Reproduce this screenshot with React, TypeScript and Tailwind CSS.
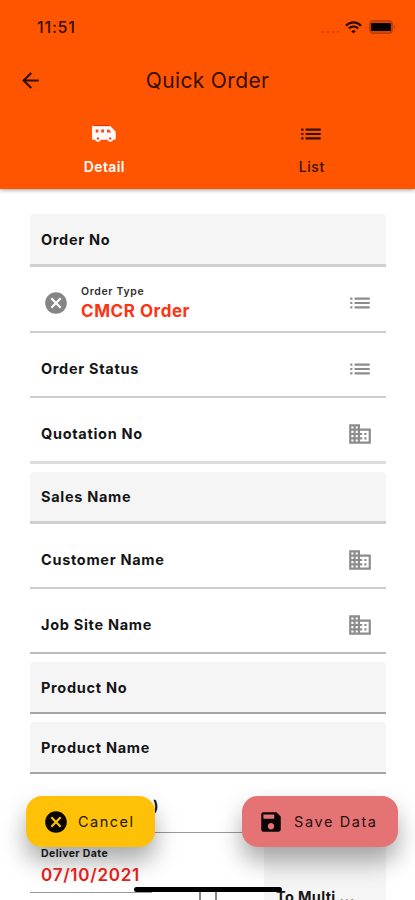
import type { ReactNode } from "react";
import {
  MdArrowBack,
  MdCancel,
  MdDomain,
  MdList,
  MdSave,
} from "react-icons/md";

function StatusBar() {
  return (
    <div className="flex h-[54px] items-center justify-between pl-[37px] pr-[19px]">
      <span className="text-[16px] font-medium leading-none tracking-[0.8px] text-[#351000]">11:51</span>
      <div className="flex items-center">
        <div className="mr-[6px] mt-[9px] flex gap-[3px]">
          {[0, 1, 2, 3].map((dot) => (
            <span key={dot} className="h-[2px] w-[2px] rounded-full bg-[#c63e00]" />
          ))}
        </div>
        <svg width="17" height="13" viewBox="0 0 17 13" fill="none" stroke="#250b00" strokeWidth="2.1">
          <path d="M1 4.7C5.3.3 11.7.3 16 4.7" />
          <path d="M3.8 7.6c2.8-2.6 6.6-2.6 9.4 0" />
          <path d="M6.2 10.2c1.5-1.3 3.1-1.3 4.6 0L8.5 12.5z" fill="#250b00" stroke="none" />
        </svg>
        <svg className="ml-[7px]" width="27" height="14" viewBox="0 0 27 14">
          <rect x=".7" y=".7" width="22.6" height="12.6" rx="3.5" fill="#d84800" stroke="#b63b00" strokeWidth="1.3" />
          <rect x="2" y="3" width="20" height="8" rx="1" fill="#080200" />
          <path d="M25 4.8c1.6.8 1.6 3.6 0 4.4z" fill="#b63b00" />
        </svg>
      </div>
    </div>
  );
}

function ShuttleIcon() {
  return (
    <svg width="26" height="26" viewBox="0 0 26 26">
      <path
        d="M2.6 4.6H18c.6 0 1 .2 1.4.6l4.8 4.9c.4.4.5.8.5 1.3v6c0 .8-.5 1.3-1.2 1.3h-1.2a3.3 3.3 0 0 1-6 0H10a3.3 3.3 0 0 1-6 0H2.3c-.8 0-1.3-.5-1.3-1.3V6.2c0-.9.7-1.6 1.6-1.6z"
        fill="#fff8f5"
      />
      <path d="M2.5 4.5h16" stroke="#f52a0c" strokeWidth="1.2" />
      <path d="M4.7 8.4h2.7v3.2H4.7zM10.2 8.4H13v3.2h-2.8zM16 8.4h2.1l2.1 3.1v.1H16z" fill="#f44a24" />
      <circle cx="7" cy="17.5" r="1.2" fill="#f44a24" />
      <circle cx="19.2" cy="17.5" r="1.2" fill="#f44a24" />
    </svg>
  );
}

function Field({ label, box, icon }: { label: string; box: string; icon?: ReactNode }) {
  return (
    <div className={`flex items-center justify-between pl-[11px] pr-[13px] ${box}`}>
      <span className="text-[14.5px] font-bold leading-none tracking-[0.7px] text-[#151515]">{label}</span>
      {icon}
    </div>
  );
}

const listIcon = <MdList size={26} color="#8c8c8c" />;
const buildingIcon = <MdDomain size={26} color="#8c8c8c" className="-mt-px" />;

export default function App() {
  return (
    <div className="relative h-[900px] w-[415px] overflow-hidden bg-white font-['Inter','Liberation_Sans',sans-serif]">
      <header className="relative h-[189px] bg-[#ff5500] shadow-[0_1px_4px_rgba(0,0,0,0.4)]">
        <StatusBar />
        <div className="grid h-[52px] grid-cols-[60px_1fr_60px] items-center">
          <MdArrowBack size={25} color="#301000" className="ml-[18px]" />
          <h1 className="text-center text-[21px] leading-none tracking-[0.35px] text-[#351000]">Quick Order</h1>
        </div>
        <div className="grid grid-cols-2 pt-[15px] text-[14px] leading-none">
          <div className="flex flex-col items-center text-white">
            <ShuttleIcon />
            <span className="mt-[13px] pl-px font-semibold tracking-[0.35px]">Detail</span>
          </div>
          <div className="flex flex-col items-center text-[#351000]">
            <MdList size={26} />
            <span className="mt-[13px] pl-px font-medium tracking-[0.6px]">List</span>
          </div>
        </div>
      </header>

      <main className="ml-[30px] mt-[25px] w-[356px]">
        <Field label="Order No" box="h-[53px] rounded-t border-b-[3px] border-[#cfcfcf] bg-[#f5f5f5] pt-[3px]" />
        <div className="flex h-[66px] items-center border-b-2 border-[#cdcdcd] pl-[13px] pr-[13px] pt-[8px]">
          <MdCancel size={26} color="#858585" />
          <div className="ml-[12px] flex-1 pt-px leading-none">
            <div className="text-[10.5px] font-semibold tracking-[0.65px] text-[#303030]">Order Type</div>
            <div className="mt-[5px] text-[17px] font-bold tracking-[0.55px] text-[#ff3211]">CMCR Order</div>
          </div>
          {listIcon}
        </div>
        <Field label="Order Status" box="h-[65px] border-b-2 border-[#cdcdcd] pt-[9px]" icon={listIcon} />
        <Field label="Quotation No" box="h-[66px] border-b-[3px] border-[#dedede] pt-[9px]" icon={buildingIcon} />
        <Field label="Sales Name" box="mt-[8px] h-[52px] rounded-t border-b-[3px] border-[#cfcfcf] bg-[#f5f5f5] pt-[2px]" />
        <Field label="Customer Name" box="h-[65px] border-b-2 border-[#cdcdcd] pt-[9px]" icon={buildingIcon} />
        <Field label="Job Site Name" box="h-[65px] border-b-2 border-[#bdbdbd] pt-[9px]" icon={buildingIcon} />
        <Field label="Product No" box="mt-[8px] h-[52px] rounded-t border-b-2 border-[#a5a5a5] bg-[#f5f5f5] pt-[2px]" />
        <Field label="Product Name" box="mt-[8px] h-[52px] rounded-t border-b-2 border-[#a5a5a5] bg-[#f5f5f5] pt-[2px]" />
        <Field label=")" box="h-[59px] border-b border-[#999999] pt-[7px] [&>span]:ml-[112px]" />
        <div className="flex items-start">
          <div className="h-[60px] w-[122px] border-b border-[#999999] pl-[11px] pt-[16px] leading-none">
            <div className="relative z-10 text-[10.5px] font-bold tracking-[0.4px] text-[#151515]">Deliver Date</div>
            <div className="relative z-10 mt-[7px] text-[17px] font-semibold tracking-[0.75px] text-[#e22118]">07/10/2021</div>
          </div>
          <div className="ml-[47px] mt-[57px] h-[18px] w-[18px] border-2 border-[#858585]" />
          <div className="ml-[47px] mt-[9px] h-[70px] w-[122px] whitespace-nowrap bg-[#f5f5f5] pl-[12px] pt-[48px] text-[14.5px] font-bold leading-none tracking-[0.35px] text-[#151515]">
            To Multi ...
          </div>
        </div>
      </main>

      <div className="absolute bottom-[8px] left-[134px] h-[5px] w-[148px] rounded-full bg-black" />
      <button className="absolute left-[26px] top-[796px] flex h-[51px] w-[129px] items-center rounded-[16px] bg-[#ffc107] pl-[17px] text-[14.5px] tracking-[1.5px] text-[#201800] shadow-[0_14px_24px_rgba(0,0,0,0.34)]">
        <MdCancel size={26} color="#090700" />
        <span className="ml-[9px]">Cancel</span>
      </button>
      <button className="absolute left-[242px] top-[796px] flex h-[51px] w-[156px] items-center rounded-[16px] bg-[#e57373] pl-[16px] text-[14.5px] tracking-[1.6px] text-[#281010] shadow-[0_14px_24px_rgba(0,0,0,0.34)]">
        <MdSave size={26} color="#0b0505" />
        <span className="ml-[10px] whitespace-nowrap">Save Data</span>
      </button>
    </div>
  );
}
